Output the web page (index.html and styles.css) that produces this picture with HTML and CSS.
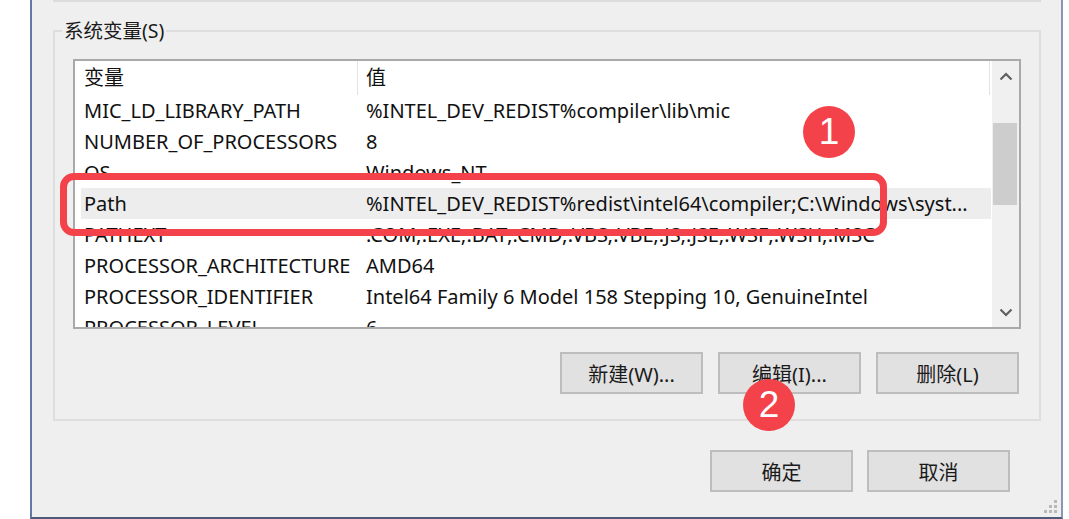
FILE: index.html
```html
<!DOCTYPE html>
<html lang="zh-CN">
<head>
<meta charset="utf-8">
<title>系统变量</title>
<link rel="stylesheet" href="styles.css">
</head>
<body>
<div class="window">
  <div class="prev-group"></div>
  <div class="group">
    <div class="legend">系统变量(S)</div>
    <div class="listbox">
      <div class="list-main">
        <div class="list-head">
          <div class="hcell hcell-name">变量</div>
          <div class="hcell hcell-value">值</div>
        </div>
        <div class="row"><div class="cell">MIC_LD_LIBRARY_PATH</div><div class="cell">%INTEL_DEV_REDIST%compiler\lib\mic</div></div>
        <div class="row"><div class="cell">NUMBER_OF_PROCESSORS</div><div class="cell">8</div></div>
        <div class="row"><div class="cell">OS</div><div class="cell">Windows_NT</div></div>
        <div class="row row-selected"><div class="cell">Path</div><div class="cell">%INTEL_DEV_REDIST%redist\intel64\compiler;C:\Windows\syst...</div></div>
        <div class="row"><div class="cell">PATHEXT</div><div class="cell">.COM;.EXE;.BAT;.CMD;.VBS;.VBE;.JS;.JSE;.WSF;.WSH;.MSC</div></div>
        <div class="row"><div class="cell">PROCESSOR_ARCHITECTURE</div><div class="cell">AMD64</div></div>
        <div class="row"><div class="cell">PROCESSOR_IDENTIFIER</div><div class="cell">Intel64 Family 6 Model 158 Stepping 10, GenuineIntel</div></div>
        <div class="row"><div class="cell">PROCESSOR_LEVEL</div><div class="cell">6</div></div>
      </div>
      <div class="scrollbar">
        <div class="sb-btn">
          <svg width="14" height="9" viewBox="0 0 14 9"><polyline points="1.5,7.5 7,2 12.5,7.5" fill="none" stroke="#5f5f5f" stroke-width="2.2"/></svg>
        </div>
        <div class="sb-track"><div class="sb-thumb"></div></div>
        <div class="sb-btn">
          <svg width="14" height="9" viewBox="0 0 14 9"><polyline points="1.5,1.5 7,7 12.5,1.5" fill="none" stroke="#5f5f5f" stroke-width="2.2"/></svg>
        </div>
      </div>
    </div>
    <div class="btn-row">
      <div class="btn">新建(W)...</div>
      <div class="btn">编辑(I)...</div>
      <div class="btn">删除(L)</div>
    </div>
  </div>
  <div class="dialog-buttons">
    <div class="btn">确定</div>
    <div class="btn">取消</div>
  </div>
  <svg class="grip" width="14" height="14" viewBox="0 0 14 14">
    <rect x="10" y="0" width="3" height="3" fill="#b9b9b9"/>
    <rect x="5" y="5" width="3" height="3" fill="#b9b9b9"/>
    <rect x="10" y="5" width="3" height="3" fill="#b9b9b9"/>
    <rect x="0" y="10" width="3" height="3" fill="#b9b9b9"/>
    <rect x="5" y="10" width="3" height="3" fill="#b9b9b9"/>
    <rect x="10" y="10" width="3" height="3" fill="#b9b9b9"/>
  </svg>
</div>
<div class="mark-box"></div>
<div class="badge badge-1">1</div>
<div class="badge badge-2">2</div>
</body>
</html>
```
FILE: styles.css
```css
html, body {
  margin: 0;
  padding: 0;
  background: #ffffff;
}
body {
  position: relative;
  width: 1069px;
  height: 519px;
  overflow: hidden;
  font-family: "Noto Sans", "Noto Sans CJK SC", sans-serif;
  color: #111;
}
.window {
  position: relative;
  box-sizing: border-box;
  margin-left: 30px;
  width: 1033px;
  height: 519px;
  background: #efefef;
  border-left: 2px solid #6577a6;
  border-right: 2px solid #8b96b2;
  border-bottom: 2px solid #4f5a78;
}
.prev-group {
  margin-left: 21px;
  width: 988px;
  box-sizing: border-box;
  height: 2px;
  border: 2px solid #dcdcdc;
  border-top: none;
}
.group {
  box-sizing: border-box;
  margin: 28px 0 0 21px;
  width: 988px;
  height: 391px;
  border: 2px solid #dedede;
  padding: 0 18px 0 18px;
}
.legend {
  display: block;
  width: fit-content;
  margin: -13px 0 0 -11px;
  padding: 0 2px;
  background: #efefef;
  font-size: 19.5px;
  line-height: 24px;
  color: #1a1a1a;
}
.listbox {
  box-sizing: border-box;
  margin-top: 16px;
  width: 948px;
  height: 270px;
  border: 2px solid #a9a9a9;
  background: #ffffff;
  display: flex;
  overflow: hidden;
}
.list-main {
  flex: 1;
  overflow: hidden;
  font-size: 20px;
}
.list-head {
  display: flex;
  height: 34px;
  line-height: 34px;
  width: 915px;
}
.hcell {
  box-sizing: border-box;
}
.hcell-name {
  width: 282px;
  padding-left: 9px;
}
.hcell-value {
  flex: 1;
  padding-left: 8px;
  border-left: 1px solid #e3e3e3;
  border-right: 1px solid #e3e3e3;
}
.row {
  display: grid;
  grid-template-columns: 282px 1fr;
  margin-left: 6px;
  width: 910px;
  height: 31px;
  line-height: 31px;
  white-space: nowrap;
}
.row-selected {
  background: #ededed;
}
.cell {
  padding-left: 3px;
  overflow: hidden;
}
.scrollbar {
  width: 27px;
  background: #f0f0f0;
  display: flex;
  flex-direction: column;
}
.sb-btn {
  height: 30px;
  display: flex;
  align-items: center;
  justify-content: center;
}
.sb-track {
  flex: 1;
  padding: 32px 2px 0 1px;
}
.sb-thumb {
  height: 82px;
  background: #cdcdcd;
}
.btn-row {
  display: flex;
  justify-content: flex-end;
  gap: 15px;
  margin: 23px 2px 0 0;
}
.btn {
  box-sizing: border-box;
  width: 143px;
  height: 42px;
  border: 2px solid #bdbdbd;
  background: #e1e1e1;
  display: flex;
  align-items: center;
  justify-content: center;
  font-size: 20px;
  color: #1a1a1a;
}
.dialog-buttons {
  display: flex;
  justify-content: flex-end;
  gap: 14px;
  margin: 29px 51px 0 0;
}
.grip {
  position: absolute;
  right: 3px;
  bottom: 3px;
}
.mark-box {
  position: absolute;
  box-sizing: border-box;
  left: 60px;
  top: 173px;
  width: 827px;
  height: 63px;
  border: 7px solid #f4424a;
  border-radius: 14px;
}
.badge {
  position: absolute;
  width: 52px;
  height: 52px;
  border-radius: 50%;
  background: #f4424a;
  color: #fff;
  font-family: "Liberation Sans", Arial, sans-serif;
  font-size: 37px;
  line-height: 52px;
  text-align: center;
}
.badge-1 {
  left: 803px;
  top: 106px;
}
.badge-2 {
  left: 743px;
  top: 379px;
}
```
